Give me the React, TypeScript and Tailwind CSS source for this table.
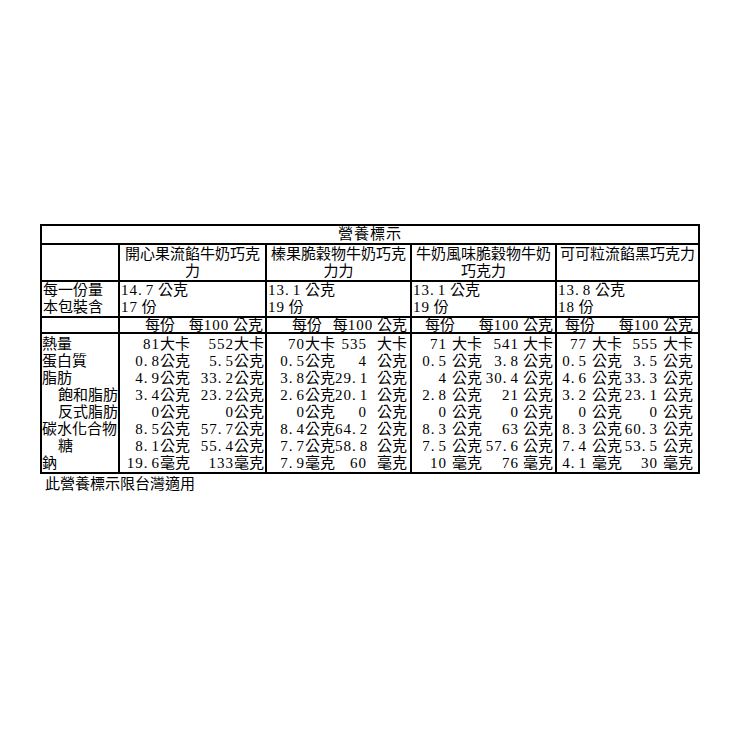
import React from "react";

const labels: { t: string; indent?: boolean }[] = [
  { t: "熱量" },
  { t: "蛋白質" },
  { t: "脂肪" },
  { t: "飽和脂肪", indent: true },
  { t: "反式脂肪", indent: true },
  { t: "碳水化合物" },
  { t: "糖", indent: true },
  { t: "鈉" },
];

const c1: [string, string][] = [
  ["81大卡", "552大卡"],
  ["0.8公克", "5.5公克"],
  ["4.9公克", "33.2公克"],
  ["3.4公克", "23.2公克"],
  ["0公克", "0公克"],
  ["8.5公克", "57.7公克"],
  ["8.1公克", "55.4公克"],
  ["19.6毫克", "133毫克"],
];

const c2: [string, string, string][] = [
  ["70大卡", "535", "大卡"],
  ["0.5公克", "4", "公克"],
  ["3.8公克", "29.1", "公克"],
  ["2.6公克", "20.1", "公克"],
  ["0公克", "0", "公克"],
  ["8.4公克", "64.2", "公克"],
  ["7.7公克", "58.8", "公克"],
  ["7.9毫克", "60", "毫克"],
];

const c3: [string, string, string, string][] = [
  ["71", "大卡", "541", "大卡"],
  ["0.5", "公克", "3.8", "公克"],
  ["4", "公克", "30.4", "公克"],
  ["2.8", "公克", "21", "公克"],
  ["0", "公克", "0", "公克"],
  ["8.3", "公克", "63", "公克"],
  ["7.5", "公克", "57.6", "公克"],
  ["10", "毫克", "76", "毫克"],
];

const c4: [string, string, string, string][] = [
  ["77", "大卡", "555", "大卡"],
  ["0.5", "公克", "3.5", "公克"],
  ["4.6", "公克", "33.3", "公克"],
  ["3.2", "公克", "23.1", "公克"],
  ["0", "公克", "0", "公克"],
  ["8.3", "公克", "60.3", "公克"],
  ["7.4", "公克", "53.5", "公克"],
  ["4.1", "毫克", "30", "毫克"],
];

function Digits({ d }: { d: string }) {
  const parts = d.split(".");
  return (
    <span className="tracking-[1px]">
      {parts.length > 1 ? (
        <>
          {parts[0]}
          <span className="mr-[3px]">.</span>
          {parts[1]}
        </>
      ) : (
        d
      )}
    </span>
  );
}

function V({ v }: { v: string }) {
  const m = v.match(/^([\d.]+)(.*)$/);
  if (!m) return <>{v}</>;
  return (
    <>
      <Digits d={m[1]} />
      {m[2]}
    </>
  );
}

function Cell({ className = "", children }: { className?: string; children?: React.ReactNode }) {
  return <div className={"overflow-hidden bg-white " + className}>{children}</div>;
}

function Header({ className }: { className: string }) {
  return (
    <Cell className={"flex items-center justify-between whitespace-nowrap leading-[14px] " + className}>
      <span>每份</span>
      <span>
        每<V v="100" /> 公克
      </span>
    </Cell>
  );
}

function Serving({ w, n }: { w: string; n: string }) {
  return (
    <Cell className="whitespace-nowrap pl-[1px]">
      <div>
        <V v={w} /> 公克
      </div>
      <div>
        <V v={n} /> 份
      </div>
    </Cell>
  );
}

function Quad({ rows, cols }: { rows: [string, string, string, string][]; cols: string }) {
  return (
    <Cell className={"grid auto-rows-[17px] content-start whitespace-nowrap pt-[2px] " + cols}>
      {rows.map((r, i) => (
        <React.Fragment key={i}>
          <span className="text-right">
            <V v={r[0]} />
          </span>
          <span className="pl-[5px]">{r[1]}</span>
          <span className="text-right">
            <V v={r[2]} />
          </span>
          <span className="text-right">{r[3]}</span>
        </React.Fragment>
      ))}
    </Cell>
  );
}

export default function App() {
  return (
    <div className="h-[740px] w-[740px] bg-white pl-[40px] pt-[224px] font-['Liberation_Serif','Noto_Sans_CJK_TC',serif] text-[15px] leading-[17px] text-black">
      <div className="grid w-[660px] grid-cols-[76px_145px_143px_143px_141px] grid-rows-[17px_35px_34px_14px_138px] gap-[2px] bg-black p-[2px]">
        {/* title */}
        <Cell className="col-span-5 text-center tracking-[1px]">營養標示</Cell>

        {/* product names */}
        <Cell />
        <Cell className="whitespace-nowrap pt-[1px] text-center">
          開心果流餡牛奶巧克
          <br />力
        </Cell>
        <Cell className="whitespace-nowrap pt-[1px] text-center">
          榛果脆穀物牛奶巧克
          <br />力力
        </Cell>
        <Cell className="whitespace-nowrap pt-[1px] text-center">
          牛奶風味脆穀物牛奶
          <br />巧克力
        </Cell>
        <Cell className="whitespace-nowrap pt-[1px] text-center">可可粒流餡黑巧克力</Cell>

        {/* serving */}
        <Cell className="whitespace-nowrap pl-[1px]">
          每一份量
          <br />本包裝含
        </Cell>
        <Serving w="14.7" n="17" />
        <Serving w="13.1" n="19" />
        <Serving w="13.1" n="19" />
        <Serving w="13.8" n="18" />

        {/* header */}
        <Cell />
        <Header className="pl-[25px] pr-[2px]" />
        <Header className="pl-[25px] pr-[3px]" />
        <Header className="pl-[13px] pr-[2px]" />
        <Header className="pl-[8px] pr-[5px]" />

        {/* data */}
        <Cell className="whitespace-nowrap pt-[2px]">
          {labels.map((l) => (
            <div key={l.t} className={l.indent ? "pl-[16px]" : ""}>
              {l.t}
            </div>
          ))}
        </Cell>
        <Cell className="grid auto-rows-[17px] grid-cols-[70px_74px] content-start whitespace-nowrap pt-[2px] text-right">
          {c1.map((r, i) => (
            <React.Fragment key={i}>
              <span>
                <V v={r[0]} />
              </span>
              <span>
                <V v={r[1]} />
              </span>
            </React.Fragment>
          ))}
        </Cell>
        <Cell className="grid auto-rows-[17px] grid-cols-[68px_32px_40px] content-start whitespace-nowrap pt-[2px] text-right">
          {c2.map((r, i) => (
            <React.Fragment key={i}>
              <span>
                <V v={r[0]} />
              </span>
              <span>
                <V v={r[1]} />
              </span>
              <span>{r[2]}</span>
            </React.Fragment>
          ))}
        </Cell>
        <Quad rows={c3} cols="grid-cols-[35px_36px_36px_34px]" />
        <Quad rows={c4} cols="grid-cols-[30px_34px_37px_35px]" />
      </div>
      <div className="mt-[2px] pl-[5px]">此營養標示限台灣適用</div>
    </div>
  );
}
